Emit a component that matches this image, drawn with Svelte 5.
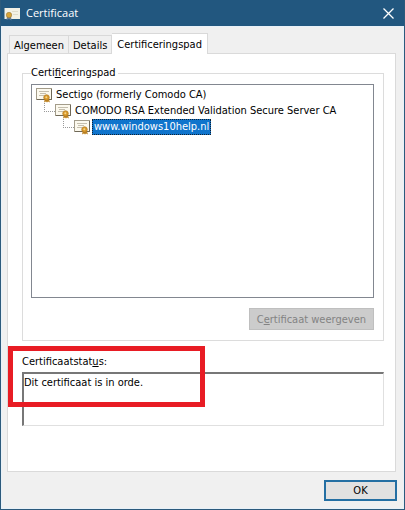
<script lang="ts">
  const tabs = ['Algemeen', 'Details', 'Certificeringspad'];
  const chain = [
    'Sectigo (formerly Comodo CA)',
    'COMODO RSA Extended Validation Secure Server CA',
    'www.windows10help.nl'
  ];

  let activeTab = $state(2);
  let selected = $state(2);
</script>

{#snippet certIcon()}
  <svg class="cert" width="17" height="16" viewBox="0 0 17 16" aria-hidden="true">
    <rect x="0.5" y="1.5" width="15" height="11" fill="#fcf9ee" stroke="#a39c8a" />
    <path d="M1 12.5H15.5V2" fill="none" stroke="#6f6858" />
    <path d="M3 4.5H13M4 6.5H10M3 8.5H8" stroke="#c5bfae" />
    <path d="M9 11L8 15.5L10 14.5L11 15.5L12 14.5L14 15.5L12.5 11Z" fill="#bd8426" />
    <circle cx="10.5" cy="10.5" r="2.8" fill="#d99a2b" stroke="#a8711c" stroke-width="0.6" />
    <circle cx="10.3" cy="10.3" r="1" fill="#f5d58b" />
  </svg>
{/snippet}

<div class="dialog" role="dialog" aria-labelledby="title">
  <header>
    <svg width="17" height="16" viewBox="0 0 17 16" aria-hidden="true">
      <rect x="0.5" y="3" width="15.5" height="11" fill="#f3f1e6" />
      <path d="M8 6.5H14M9 9.5H14" stroke="#e0dccb" />
      <path d="M3 11L2.5 15L5 14L7.5 15.5L7 11Z" fill="#6b7f96" />
      <circle cx="5" cy="10" r="2.7" fill="#d9a437" stroke="#9a7a3a" stroke-width="0.6" />
    </svg>
    <h1 id="title">Certificaat</h1>
    <button class="close" aria-label="Sluiten">
      <svg width="11" height="11" viewBox="0 0 11 11">
        <path d="M0.5 0.5L10.5 10.5M10.5 0.5L0.5 10.5" stroke="#fff" stroke-width="1.3" />
      </svg>
    </button>
  </header>

  <main>
    <div class="tabs" role="tablist">
      {#each tabs as tab, i}
        <button
          class="tab"
          class:active={activeTab === i}
          role="tab"
          aria-selected={activeTab === i}
          onclick={() => (activeTab = i)}>{tab}</button>
      {/each}
    </div>

    <div class="panel" role="tabpanel">
      <fieldset>
        <legend>Certi<u>f</u>iceringspad</legend>
        <div class="tree" role="tree">
          {#each chain as name, i}
            <div class="row" style:padding-left="{i * 19}px" role="treeitem" aria-selected={selected === i}>
              {#if i > 0}<span class="elbow"></span>{/if}
              {@render certIcon()}
              <button class="name" class:selected={selected === i} onclick={() => (selected = i)}>{name}</button>
            </div>
          {/each}
        </div>
        <button class="view" disabled>C<u>e</u>rtificaat weergeven</button>
      </fieldset>

      <div class="status">
        <label for="status">Certificaatstat<u>u</u>s:</label>
        <textarea id="status" readonly>Dit certificaat is in orde.</textarea>
        <div class="marker"></div>
      </div>
    </div>

    <footer>
      <button class="ok">OK</button>
    </footer>
  </main>
</div>

<style>
  :global(body) {
    margin: 0;
  }

  .dialog {
    display: flex;
    flex-direction: column;
    box-sizing: border-box;
    min-height: 100vh;
    border: 1px solid #2c5a7c;
    border-top: 0;
    background: #f0f0f0;
    color: #000;
    font: 11px/16px "DejaVu Sans Condensed", Tahoma, sans-serif;
  }

  button,
  textarea {
    font: inherit;
    color: inherit;
    margin: 0;
    border-radius: 0;
  }

  header {
    display: flex;
    align-items: center;
    height: 26px;
    padding: 0 10px 0 3px;
    background: #22577f;
    color: #fff;
  }

  h1 {
    flex: 1;
    margin: 0 0 0 5px;
    font: 11px/16px "Open Sans", "Segoe UI", sans-serif;
  }

  .close {
    display: flex;
    padding: 0;
    border: 0;
    background: none;
  }

  main {
    display: flex;
    flex: 1;
    flex-direction: column;
    padding: 7px 7px 8px 6px;
    box-shadow: inset 0 0 0 1px #e8f1f8;
  }

  .tabs {
    display: flex;
    align-items: flex-end;
    padding-left: 2px;
  }

  .tab {
    height: 18px;
    padding: 2px 4px 0;
    border: 1px solid #d9d9d9;
    border-bottom: 0;
    background: #f0f0f0;
    line-height: 15px;
  }

  .tab + .tab {
    border-left: 0;
  }

  .tab.active {
    z-index: 1;
    height: 21px;
    margin-bottom: -1px;
    padding: 0 5px;
    background: #fff;
  }

  .panel {
    display: flex;
    flex: 1;
    flex-direction: column;
    margin-right: 1px;
    padding: 11px 11px 45px 14px;
    border: 1px solid #dadada;
    background: #fff;
  }

  fieldset {
    display: flex;
    flex: 1;
    flex-direction: column;
    min-width: 0;
    margin: 0;
    padding: 3px 9px 8px 8px;
    border: 1px solid #dcdcdc;
  }

  legend {
    padding: 0 2px 0 0;
  }

  .tree {
    flex: 1;
    min-height: 208px;
    padding: 2px 4px;
    border: 1px solid #828790;
  }

  .row {
    display: flex;
    position: relative;
    align-items: center;
    height: 16px;
  }

  .elbow {
    position: absolute;
    width: 10px;
    height: 8px;
    margin: -8px 0 0 -11px;
    border: 1px dotted #999;
    border-width: 0 0 1px 1px;
  }

  .cert {
    flex: none;
  }

  .name {
    height: 16px;
    margin-left: 1px;
    padding: 0 1px;
    border: 1px solid transparent;
    background: none;
    line-height: 14px;
    white-space: nowrap;
  }

  .name.selected {
    border: 1px dotted #123;
    background: #0f74cc;
    color: #fff;
  }

  .view {
    align-self: flex-end;
    height: 22px;
    margin-top: 10px;
    padding: 2px 7px 0;
    border: 1px solid #bfbfbf;
    background: #ccc;
    color: #838383;
  }

  .status {
    display: flex;
    position: relative;
    flex-direction: column;
    margin-top: 13px;
  }

  textarea {
    height: 54px;
    margin-top: 2px;
    padding: 1px 0 0;
    box-sizing: border-box;
    border: 2px solid #777;
    border-right: 1px solid #e0e0e0;
    border-bottom: 1px solid #e0e0e0;
    outline: 0;
    resize: none;
    line-height: 16px;
    overflow: hidden;
  }

  .marker {
    position: absolute;
    top: -8px;
    left: -14px;
    width: 187px;
    height: 51px;
    border: 5px solid #e81c24;
    pointer-events: none;
  }

  footer {
    display: flex;
    justify-content: flex-end;
    padding-top: 8px;
  }

  .ok {
    width: 73px;
    height: 21px;
    padding: 1px 0 0;
    border: 2px solid #246fa3;
    background: #e1e1e1;
  }
</style>
